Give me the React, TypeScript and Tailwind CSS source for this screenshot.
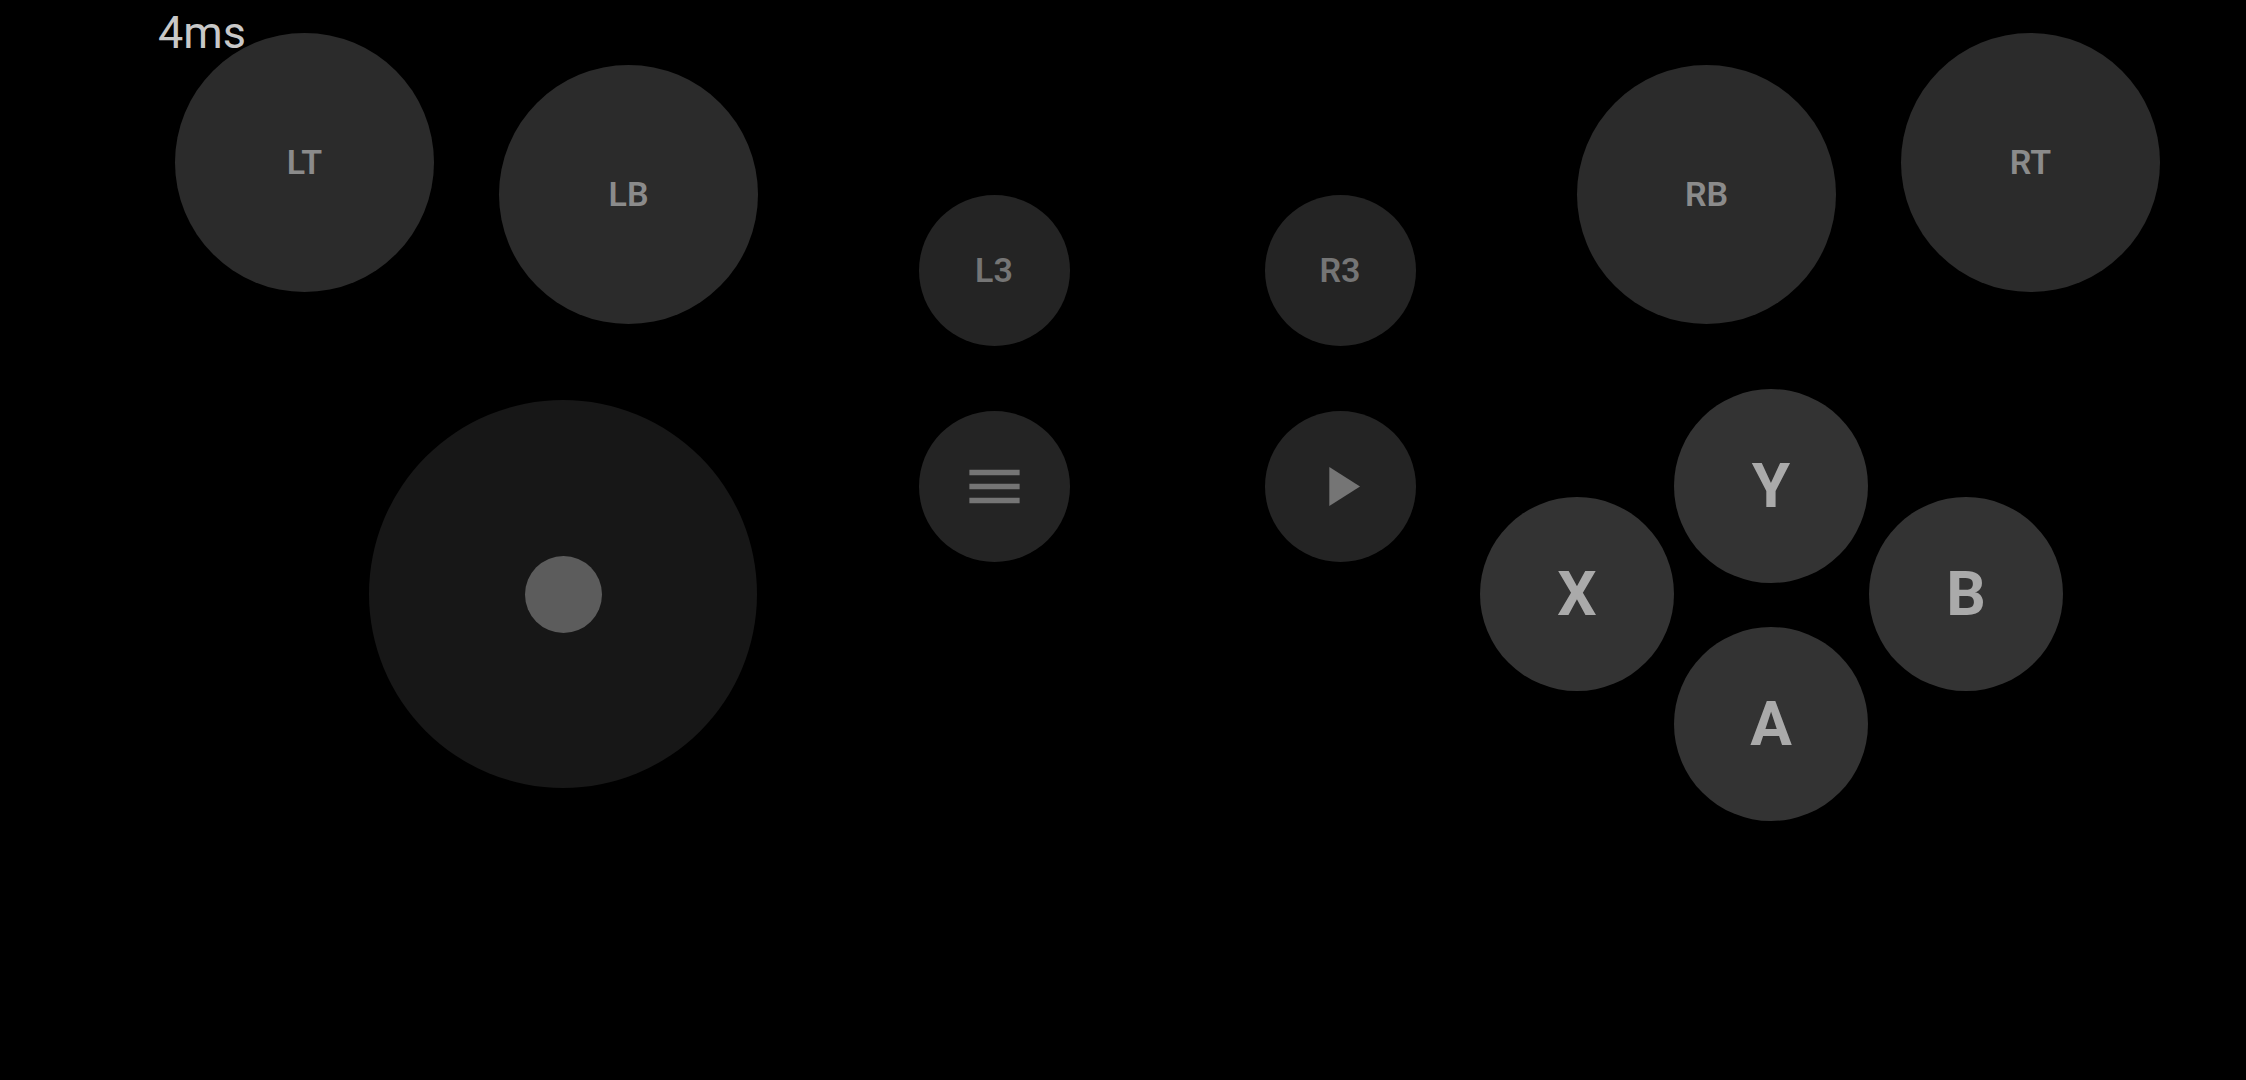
import React from 'react';
import { clsx } from 'clsx';
import { MdMenu, MdPlayArrow } from 'react-icons/md';

type PadButtonProps = {
  label: string;
  className?: string;
  children?: React.ReactNode;
};

const PadButton = ({ label, className, children }: PadButtonProps) => (
  <button
    type="button"
    aria-label={label}
    className={clsx('flex shrink-0 items-center justify-center rounded-full active:brightness-150', className)}
  >
    {children ?? label}
  </button>
);

const SHOULDER = 'size-[259px] bg-[#2b2b2b] text-[#8b8b8b] text-[34px] font-semibold';
const SMALL = 'size-[151px] bg-[#242424] text-[#757575] text-[34px] font-semibold';
const FACE = 'size-[194px] bg-[#333333] text-[#aaaaaa] text-[62px] leading-[70px] font-bold';

const LeftCluster = () => (
  <section aria-label="Left controls">
    <div className="flex items-start gap-[65px]">
      <PadButton label="LT" className={SHOULDER} />
      <PadButton label="LB" className={clsx(SHOULDER, 'mt-8')} />
    </div>
    <div className="mt-[76px] ml-[194px] flex">
      <PadButton label="Left stick" className="size-[388px] bg-[#171717]">
        <span className="size-[77px] rounded-full bg-[#5c5c5c]" />
      </PadButton>
    </div>
  </section>
);

const CenterCluster = () => (
  <section aria-label="System controls" className="grid grid-cols-2 gap-x-[195px] gap-y-[65px] pt-[162px] pl-24">
    <PadButton label="L3" className={SMALL} />
    <PadButton label="R3" className={SMALL} />
    <PadButton label="Menu" className={SMALL}>
      <MdMenu size={67} />
    </PadButton>
    <PadButton label="Start" className={SMALL}>
      <MdPlayArrow size={67} />
    </PadButton>
  </section>
);

const RightCluster = () => (
  <section aria-label="Right controls">
    <div className="flex items-start justify-end gap-[65px]">
      <PadButton label="RB" className={clsx(SHOULDER, 'mt-8')} />
      <PadButton label="RT" className={SHOULDER} />
    </div>
    <div className="mt-[65px] mr-[97px] flex items-start">
      <PadButton label="X" className={clsx(FACE, 'mt-[108px]')} />
      <div className="mr-px flex flex-col gap-11">
        <PadButton label="Y" className={FACE} />
        <PadButton label="A" className={FACE} />
      </div>
      <PadButton label="B" className={clsx(FACE, 'mt-[108px]')} />
    </div>
  </section>
);

const App = () => {
  return (
    <main className="relative min-h-screen bg-black font-['Roboto',sans-serif] select-none">
      <div className="flex items-start justify-between pt-[33px] pr-[86px] pl-[175px]">
        <LeftCluster />
        <CenterCluster />
        <RightCluster />
      </div>

      {/* Latency readout floats over the triggers */}
      <output className="absolute top-[7px] left-[158px] text-[45px] leading-[52px] text-[#c8c8c8]">4ms</output>
    </main>
  );
};

export default App;
